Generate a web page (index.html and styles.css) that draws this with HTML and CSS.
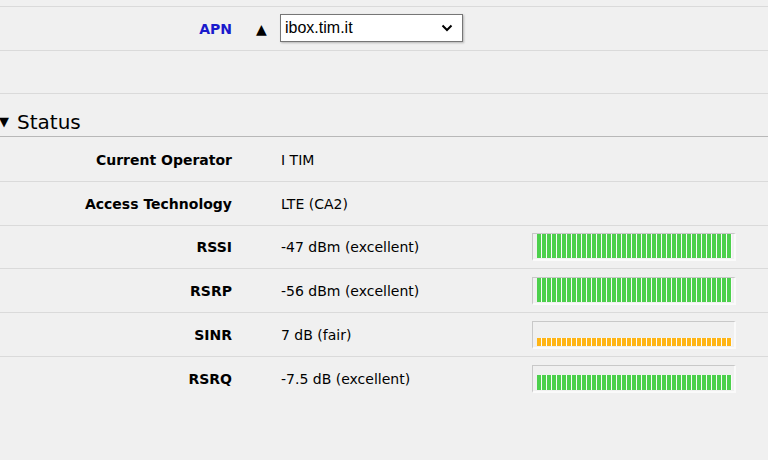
FILE: index.html
```html
<!DOCTYPE html>
<html>
<head>
<meta charset="utf-8">
<link rel="stylesheet" href="styles.css">
</head>
<body>
<div class="topline"></div>
<div class="row apn-row">
  <div class="label apn">APN</div>
  <div class="sorter">&#9650;</div>
  <div class="select">
    <span class="select-text">ibox.tim.it</span>
    <svg class="chev" width="12" height="8" viewBox="0 0 12 8"><path d="M1.5 1.5 L6 6 L10.5 1.5" fill="none" stroke="#000" stroke-width="2"/></svg>
  </div>
</div>
<div class="row empty"></div>
<div class="heading">
  <span class="caret">&#9660;</span>
  <span class="heading-text">Status</span>
</div>
<div class="row r1">
  <div class="label">Current Operator</div>
  <div class="value">I TIM</div>
</div>
<div class="row r2">
  <div class="label">Access Technology</div>
  <div class="value">LTE (CA2)</div>
</div>
<div class="row r3">
  <div class="label">RSSI</div>
  <div class="value">-47 dBm (excellent)</div>
  <div class="meter"><div class="bar green" style="height:24px"></div></div>
</div>
<div class="row r4">
  <div class="label">RSRP</div>
  <div class="value">-56 dBm (excellent)</div>
  <div class="meter"><div class="bar green" style="height:24px"></div></div>
</div>
<div class="row r5">
  <div class="label">SINR</div>
  <div class="value">7 dB (fair)</div>
  <div class="meter"><div class="bar orange" style="height:8px"></div></div>
</div>
<div class="row r6 last">
  <div class="label">RSRQ</div>
  <div class="value">-7.5 dB (excellent)</div>
  <div class="meter"><div class="bar green" style="height:15px"></div></div>
</div>
</body>
</html>
```
FILE: styles.css
```css
html, body {
  margin: 0;
  padding: 0;
  background: #f0f0f0;
  font-family: "DejaVu Sans", Verdana, sans-serif;
  font-size: 14px;
  color: #000;
}
.topline {
  height: 6px;
  border-bottom: 1px solid #dadada;
}
.row {
  display: flex;
  align-items: center;
  height: 43px;
  border-bottom: 1px solid #dadada;
}
.last { border-bottom: none; }
.empty { height: 42px; }
.r1 { padding-top: 2px; box-sizing: border-box; height: 45px; }
.r2 { height: 43px; }
.r3 { height: 42px; }
.r4 { height: 43px; }
.r5 { height: 43px; }
.r6 { height: 43px; }
.label {
  width: 232px;
  text-align: right;
  font-weight: bold;
  box-sizing: border-box;
  flex: none;
}
.apn { color: #1a1acc; }
.value {
  margin-left: 49px;
  width: 251px;
  flex: none;
}
.sorter {
  margin-left: 24px;
  width: 24px;
  font-size: 14px;
  line-height: 1;
  flex: none;
}
.select {
  box-sizing: border-box;
  width: 183px;
  height: 28px;
  background: #fff;
  border: 1px solid #767676;
  box-shadow: 1px 1px 2px rgba(0,0,0,0.25);
  display: flex;
  align-items: center;
  justify-content: space-between;
  padding: 0 9px 0 4px;
  font-family: "Liberation Sans", Arial, sans-serif;
  font-size: 16px;
  margin-top: -1px;
}
.heading {
  border-bottom: 1px solid #b8b8b8;
  display: flex;
  align-items: flex-end;
  padding-bottom: 2px;
  box-sizing: border-box;
  height: 43px;
}
.caret {
  font-size: 13px;
  margin-left: -1px;
  width: 18px;
  line-height: 24px;
}
.heading-text {
  font-size: 20px;
  line-height: 24px;
}
.meter {
  box-sizing: border-box;
  width: 204px;
  height: 28px;
  border-top: 1px solid #c8c8c8;
  border-left: 1px solid #c8c8c8;
  border-right: 2px solid #fafafa;
  border-bottom: 2px solid #fafafa;
  display: flex;
  align-items: flex-end;
  padding: 0 2px 1px 4px;
}
.bar {
  width: 195px;
}
.green {
  background: repeating-linear-gradient(90deg, #4cd04c 0, #4cd04c 4px, #fbfbfb 4px, #fbfbfb 5px);
}
.orange {
  background: repeating-linear-gradient(90deg, #ffb515 0, #ffb515 4px, #fbfbfb 4px, #fbfbfb 5px);
}
```
